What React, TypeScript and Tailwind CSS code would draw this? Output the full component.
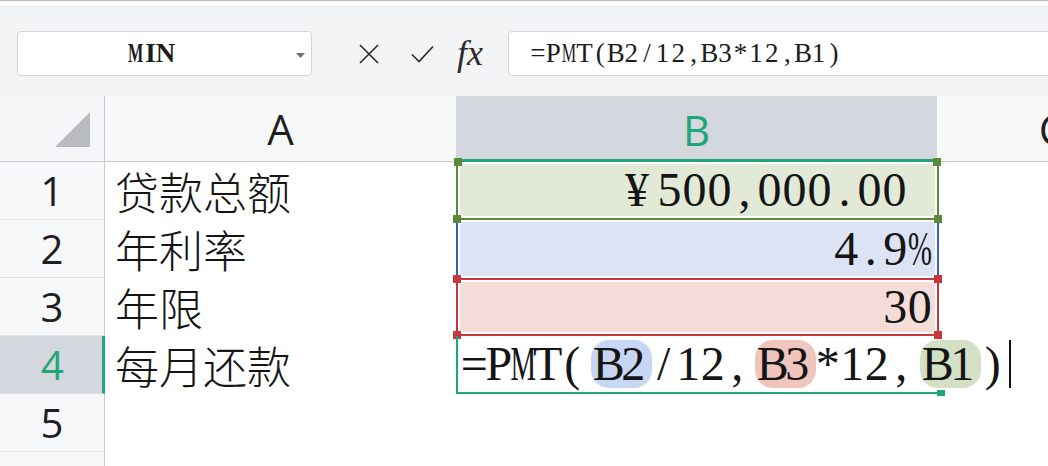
import React from 'react';

function Mono({ text, w }: { text: string; w: string }) {
  return (
    <span className="inline-flex shrink-0">
      {Array.from(text).map((c, i) => (
        <span key={i} className={`inline-flex shrink-0 justify-center ${w}`}>
          {c === 'M' || c === '%' ? <span className="inline-block scale-x-[0.6]">{c}</span> : c}
        </span>
      ))}
    </span>
  );
}

function Corner({ pos, color }: { pos: string; color: string }) {
  return <span className={`absolute z-10 h-[8px] w-[8px] ${pos} ${color}`} />;
}

function RowHead({ n, active }: { n: number; active?: boolean }) {
  return (
    <div
      className={
        active
          ? "flex w-[105px] shrink-0 items-center justify-center border-b border-r-[3px] border-b-[#dcdee2] border-r-[#21a675] bg-[#d4d8de] pl-[3px] font-['Open_Sans',sans-serif] text-[40px] text-[#21a675]"
          : "flex w-[105px] shrink-0 items-center justify-center border-b border-r border-b-[#e1e3e6] border-r-[#c8cbd0] bg-[#f7f8fa] font-['Open_Sans',sans-serif] text-[40px] text-[#1f1f1f]"
      }
    >
      {n}
    </div>
  );
}

function ACell({ text }: { text: string }) {
  return (
    <div className="flex w-[351px] shrink-0 items-center pl-[10px] font-['Noto_Sans_CJK_SC',sans-serif] text-[44px] font-light text-[#151515]">
      {text}
    </div>
  );
}

export default function App() {
  const serif = "font-['Liberation_Serif','Noto_Sans_CJK_SC',serif]";
  return (
    <div className="relative h-[466px] w-[1048px] overflow-hidden bg-white">
      {/* toolbar */}
      <div className="flex h-[96px] flex-col bg-[#f3f4f6]">
        <div className="h-px bg-[#bdbdbd]" />
        <div className="h-[6px] border-b border-[#e9eaed] bg-[#fbfbfc]" />
        <div className="flex items-start pl-[17px] pt-[24px]">
          <div className="relative flex h-[45px] w-[295px] shrink-0 items-center justify-center rounded-[4px] border border-[#d2d4d9] bg-white pr-[28px]">
            <span className={`${serif} text-[27px] font-semibold text-[#1c1c1c]`}>
              <Mono text="MIN" w="w-[15px]" />
            </span>
            <svg className="absolute right-[6px] top-[21px]" width="9" height="5" viewBox="0 0 9 5">
              <path d="M0 0H9L4.5 5Z" fill="#6b6f7a" />
            </svg>
          </div>
          <svg className="ml-[47px] mt-[13px] shrink-0" width="20" height="20" viewBox="0 0 20 20">
            <path d="M1 1L19 19M19 1L1 19" stroke="#2a2a2a" strokeWidth="1.6" fill="none" />
          </svg>
          <svg className="ml-[32px] mt-[14px] shrink-0" width="23" height="18" viewBox="0 0 23 18">
            <path d="M1 9.5L8 16.5L22 1.5" stroke="#2a2a2a" strokeWidth="1.6" fill="none" />
          </svg>
          <span className="ml-[23px] mt-[2px] shrink-0 font-['Liberation_Serif',serif] text-[36px] italic leading-[40px] text-[#2a2a2a]">
            fx
          </span>
          <div className="ml-[25px] flex h-[45px] w-[600px] shrink-0 items-center rounded-l-[4px] border border-[#d2d4d9] bg-white pl-[21px]">
            <span className={`${serif} text-[27px] text-[#1c1c1c]`}>
              <Mono text="=PMT(B2/12,B3*12,B1)" w="w-[15.6px]" />
            </span>
          </div>
        </div>
      </div>

      {/* column header */}
      <div className="flex h-[66px]">
        <div className="flex w-[105px] shrink-0 items-end justify-end border-b border-r border-[#c8cbd0] bg-[#f5f6f8] pb-[14px] pr-[14px]">
          <svg width="35" height="35" viewBox="0 0 35 35">
            <path d="M0 35H35V0Z" fill="#b8bbc0" />
          </svg>
        </div>
        <div className="flex w-[351px] shrink-0 items-center justify-center border-b border-[#c8cbd0] bg-[#f7f8fa] font-['Open_Sans',sans-serif] text-[42px] text-[#1f1f1f]">
          A
        </div>
        <div className="flex w-[481px] shrink-0 items-center justify-center rounded-b-[2px] border-b-[3px] border-[#21a675] bg-[#d4d8de] pt-[3px] font-['Open_Sans',sans-serif] text-[42px] text-[#21a675]">
          B
        </div>
        <div className="flex w-[230px] shrink-0 items-center justify-center border-b border-[#c8cbd0] bg-[#f7f8fa] font-['Open_Sans',sans-serif] text-[42px] text-[#1f1f1f]">
          C
        </div>
      </div>

      {/* row 1 */}
      <div className="flex h-[58px]">
        <RowHead n={1} />
        <ACell text="贷款总额" />
        <div className="relative w-[483px] shrink-0 border-x-2 border-b-2 border-[#5b8a3a] p-[2px]">
          <div className={`flex h-full items-center justify-end rounded-[4px] bg-[#e2e9d7] pr-[28px] ${serif} text-[48px] text-[#151515]`}>
            <span className="mr-[8px]">¥</span>
            <Mono text="500,000.00" w="w-[25px]" />
          </div>
          <Corner pos="-left-[4px] -top-[4px]" color="bg-[#5b8a3a]" />
          <Corner pos="-right-[4px] -top-[4px]" color="bg-[#5b8a3a]" />
          <Corner pos="-left-[5px] -bottom-[5px]" color="bg-[#5b8a3a]" />
          <Corner pos="-right-[5px] -bottom-[5px]" color="bg-[#5b8a3a]" />
        </div>
      </div>

      {/* row 2 */}
      <div className="flex h-[58px]">
        <RowHead n={2} />
        <ACell text="年利率" />
        <div className="relative w-[483px] shrink-0 border-x-2 border-[#3461c1] p-[2px]">
          <div className={`flex h-full items-center justify-end rounded-[4px] bg-[#dbe3f5] pr-[3px] ${serif} text-[48px] text-[#151515]`}>
            <Mono text="4.9%" w="w-[24.5px]" />
          </div>
        </div>
      </div>

      {/* row 3 */}
      <div className="flex h-[58px]">
        <RowHead n={3} />
        <ACell text="年限" />
        <div className="relative w-[483px] shrink-0 border-2 border-[#c9363e] p-[2px]">
          <div className={`flex h-full items-center justify-end rounded-[4px] bg-[#f4dcd8] pr-[3px] ${serif} text-[48px] text-[#151515]`}>
            <Mono text="30" w="w-[24.5px]" />
          </div>
          <Corner pos="-left-[5px] -top-[5px]" color="bg-[#c9363e]" />
          <Corner pos="-right-[5px] -top-[5px]" color="bg-[#c9363e]" />
          <Corner pos="-left-[5px] -bottom-[5px]" color="bg-[#c9363e]" />
          <Corner pos="-right-[5px] -bottom-[5px]" color="bg-[#c9363e]" />
        </div>
      </div>

      {/* row 4 */}
      <div className="flex h-[58px]">
        <RowHead n={4} active />
        <ACell text="每月还款" />
        <div className="relative z-20 w-[483px] shrink-0 border-b-2 border-l-2 border-[#21a675]">
          <div className={`flex h-full items-center whitespace-nowrap pl-[4px] ${serif} text-[48px] text-[#151515]`}>
            <Mono text="=PMT(" w="w-[24.5px]" />
            <span className="ml-[6px] inline-flex h-[48px] shrink-0 items-center rounded-[18px] bg-[#c7d6f2] px-[6px]">
              <Mono text="B2" w="w-[24.5px]" />
            </span>
            <Mono text="/12," w="w-[24.5px]" />
            <span className="ml-[5px] inline-flex h-[48px] shrink-0 items-center rounded-[18px] bg-[#efc5bd] px-[6px]">
              <Mono text="B3" w="w-[24.5px]" />
            </span>
            <Mono text="*12," w="w-[24.5px]" />
            <span className="ml-[6px] inline-flex h-[48px] shrink-0 items-center rounded-[18px] bg-[#d3e0c6] px-[6px]">
              <Mono text="B1" w="w-[24.5px]" />
            </span>
            <Mono text=")" w="w-[24.5px]" />
            <span className="ml-[4px] inline-block h-[48px] w-[2px] shrink-0 bg-[#111]" />
          </div>
          <span className="absolute -bottom-[4px] -right-[6px] z-10 h-[6px] w-[8px] bg-[#21a675]" />
        </div>
      </div>

      {/* row 5 */}
      <div className="flex h-[58px]">
        <RowHead n={5} />
        <ACell text="" />
      </div>

      {/* row 6 (partial) */}
      <div className="flex h-[58px]">
        <RowHead n={6} />
        <ACell text="" />
      </div>
    </div>
  );
}
